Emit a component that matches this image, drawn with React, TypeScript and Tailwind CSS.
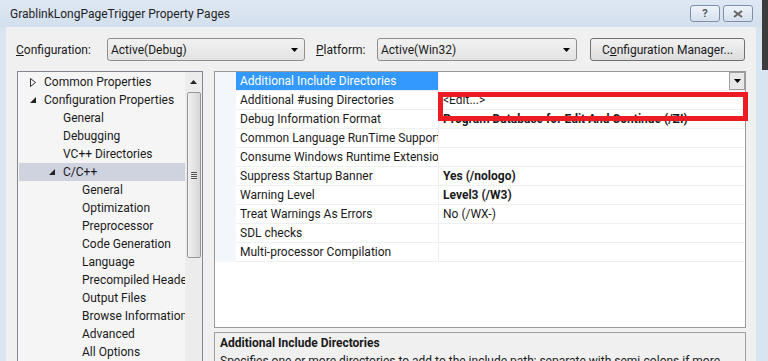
import React from "react";

type TreeItem = { label: string; level: 0 | 1 | 2; icon?: "collapsed" | "expanded"; selected?: boolean };

const tree: TreeItem[] = [
  { label: "Common Properties", level: 0, icon: "collapsed" },
  { label: "Configuration Properties", level: 0, icon: "expanded" },
  { label: "General", level: 1 },
  { label: "Debugging", level: 1 },
  { label: "VC++ Directories", level: 1 },
  { label: "C/C++", level: 1, icon: "expanded", selected: true },
  { label: "General", level: 2 },
  { label: "Optimization", level: 2 },
  { label: "Preprocessor", level: 2 },
  { label: "Code Generation", level: 2 },
  { label: "Language", level: 2 },
  { label: "Precompiled Headers", level: 2 },
  { label: "Output Files", level: 2 },
  { label: "Browse Information", level: 2 },
  { label: "Advanced", level: 2 },
  { label: "All Options", level: 2 },
];

type Row = { name: string; value?: string; bold?: boolean; highlighted?: boolean; dropdown?: boolean };
const rows: Row[] = [
  { name: "Additional Include Directories", highlighted: true, dropdown: true },
  { name: "Additional #using Directories", value: "<Edit...>" },
  { name: "Debug Information Format", value: "Program Database for Edit And Continue (/ZI)", bold: true },
  { name: "Common Language RunTime Support" },
  { name: "Consume Windows Runtime Extension" },
  { name: "Suppress Startup Banner", value: "Yes (/nologo)", bold: true },
  { name: "Warning Level", value: "Level3 (/W3)", bold: true },
  { name: "Treat Warnings As Errors", value: "No (/WX-)" },
  { name: "SDL checks" },
  { name: "Multi-processor Compilation" },
];

function Arrow() {
  return (
    <svg width="7" height="4" viewBox="0 0 7 4">
      <path d="M0 0H7L3.5 4Z" fill="#000" />
    </svg>
  );
}

function Collapsed() {
  return (
    <svg width="6" height="9" viewBox="0 0 6 9">
      <path d="M0.5 0.5L5.5 4.5L0.5 8.5Z" fill="none" stroke="#333" strokeWidth="1" />
    </svg>
  );
}

function Expanded() {
  return (
    <svg width="6" height="6" viewBox="0 0 6 6">
      <path d="M6 0V6H0Z" fill="#222" />
    </svg>
  );
}

function Combo({ text, w }: { text: string; w: string }) {
  return (
    <div
      className={`${w} h-[23px] rounded-[3px] border border-[#8e8f8f] bg-gradient-to-b from-[#f2f2f2] to-[#e3e3e3] flex items-center pl-[3px] pr-[6px]`}
    >
      <span className="flex-1 truncate">{text}</span>
      <Arrow />
    </div>
  );
}

export default function App() {
  return (
    <div className="w-[768px] h-[361px] overflow-hidden relative bg-[#d9e4f1] text-[12px] leading-[16px] text-[#1a1a1a] font-['Roboto',sans-serif]">
      {/* title bar */}
      <div className="h-[27px] flex items-center pl-[10px] pr-[15px] bg-gradient-to-b from-[#dfe8f4] to-[#d3dfee]">
        <span className="flex-1 text-[#1e1e1e]">GrablinkLongPageTrigger Property Pages</span>
        <div className="flex gap-[3px]">
          <div className="w-[30px] h-[17px] rounded-[3px] border border-[#7f8fa8] bg-gradient-to-b from-[#eef3fa] to-[#d6e0ee] flex items-center justify-center text-[11px] font-bold text-[#555]">?</div>
          <div className="w-[30px] h-[17px] rounded-[3px] border border-[#7f8fa8] bg-gradient-to-b from-[#eef3fa] to-[#d6e0ee] flex items-center justify-center">
            <svg width="10" height="8" viewBox="0 0 10 8">
              <path d="M1 1L9 7M9 1L1 7" stroke="#666" strokeWidth="2" />
            </svg>
          </div>
        </div>
      </div>
      <div className="absolute right-0 top-0 w-[6px] h-[70px] bg-[#3c3c3c]" />

      {/* client */}
      <div className="ml-[6px] w-[750px] h-[334px] bg-[#f0f0f0] flex flex-col">
        <div className="mt-[11px] h-[23px] shrink-0 flex items-center">
          <span className="ml-[10px] w-[91px]">
            <span className="underline">C</span>onfiguration:
          </span>
          <Combo text="Active(Debug)" w="w-[198px]" />
          <span className="ml-[11px] w-[61px]">
            <span className="underline">P</span>latform:
          </span>
          <Combo text="Active(Win32)" w="w-[200px]" />
          <div className="ml-[13px] w-[155px] h-[23px] rounded-[3px] border border-[#707070] bg-gradient-to-b from-[#f2f2f2] to-[#dddddd] flex items-center justify-center">
            C<span className="underline">o</span>nfiguration Manager...
          </div>
        </div>

        <div className="mt-[10px] flex flex-1 min-h-0">
          {/* tree */}
          <div className="ml-[11px] w-[186px] border border-[#828790] border-b-0 bg-[#f5f5f5] flex">
            <div className="flex-1 min-w-0 pt-[1px] overflow-hidden">
              {tree.map((t, i) => {
                const textLeft = t.level === 0 ? "pl-[25px]" : t.level === 1 ? "pl-[44px]" : "pl-[63px]";
                return (
                  <div
                    key={i}
                    className={`relative h-[18px] ml-[1px] flex items-center whitespace-nowrap overflow-hidden ${textLeft} ${t.selected ? "bg-[#cfd3df]" : ""}`}
                  >
                    {t.icon && (
                      <span className={`absolute top-0 h-[18px] flex items-center ${t.level === 0 ? "left-[11px]" : "left-[30px]"}`}>
                        {t.icon === "collapsed" ? <Collapsed /> : <Expanded />}
                      </span>
                    )}
                    {t.label}
                  </div>
                );
              })}
            </div>
            {/* scrollbar */}
            <div className="w-[17px] bg-[#ececec] flex flex-col items-center">
              <div className="h-[20px] flex items-center justify-center">
                <svg width="7" height="4" viewBox="0 0 7 4">
                  <path d="M0 4H7L3.5 0Z" fill="#222" />
                </svg>
              </div>
              <div className="w-[14px] h-[166px] shrink-0 rounded-[2px] border border-[#979797] bg-gradient-to-r from-[#f0f0f0] via-[#e4e4e4] to-[#d6d6d6] flex items-center justify-center">
                <div className="flex flex-col gap-[1px]">
                  <div className="w-[6px] h-[1px] bg-[#555]" />
                  <div className="w-[6px] h-[1px] bg-[#555]" />
                  <div className="w-[6px] h-[1px] bg-[#555]" />
                  <div className="w-[6px] h-[1px] bg-[#555]" />
                </div>
              </div>
            </div>
          </div>

          {/* right side */}
          <div className="ml-[11px] w-[532px] flex flex-col min-h-0">
            <div className="relative h-[257px] shrink-0 border border-[#9a9a9a] bg-white">
              <div className="flex">
                <div className="w-[21px] h-[190px] bg-[#f3f6fb]" />
                <div className="flex-1">
                  {rows.map((r, i) => (
                    <div key={i} className="h-[19px] flex border-b border-[#eef0f4]">
                      <div
                        className={`w-[202px] pl-[4px] flex items-center whitespace-nowrap overflow-hidden ${r.highlighted ? "bg-[#3399ff] text-white" : ""}`}
                      >
                        {r.name}
                      </div>
                      <div className={`flex-1 pl-[4px] flex items-center whitespace-nowrap overflow-hidden border-l border-[#eef0f4] ${r.bold ? "font-bold" : ""}`}>
                        <span className="flex-1">{r.value ?? ""}</span>
                        {r.dropdown && (
                          <div className="w-[16px] h-[18px] border border-[#a0a0a0] bg-[#e8e8e8] flex items-center justify-center">
                            <Arrow />
                          </div>
                        )}
                      </div>
                    </div>
                  ))}
                </div>
              </div>
              <div className="absolute left-[223px] top-[20px] w-[310px] h-[29px] border-[5px] border-[#ed1c24]" />
            </div>
            <div className="mt-[4px] flex-1 min-h-0 overflow-hidden border border-[#a0a0a0] border-b-0 pl-[5px] pt-[2px]">
              <div className="font-bold">Additional Include Directories</div>
              <div className="mt-[2px] whitespace-nowrap">
                Specifies one or more directories to add to the include path; separate with semi-colons if more
              </div>
            </div>
          </div>
        </div>
      </div>
    </div>
  );
}
